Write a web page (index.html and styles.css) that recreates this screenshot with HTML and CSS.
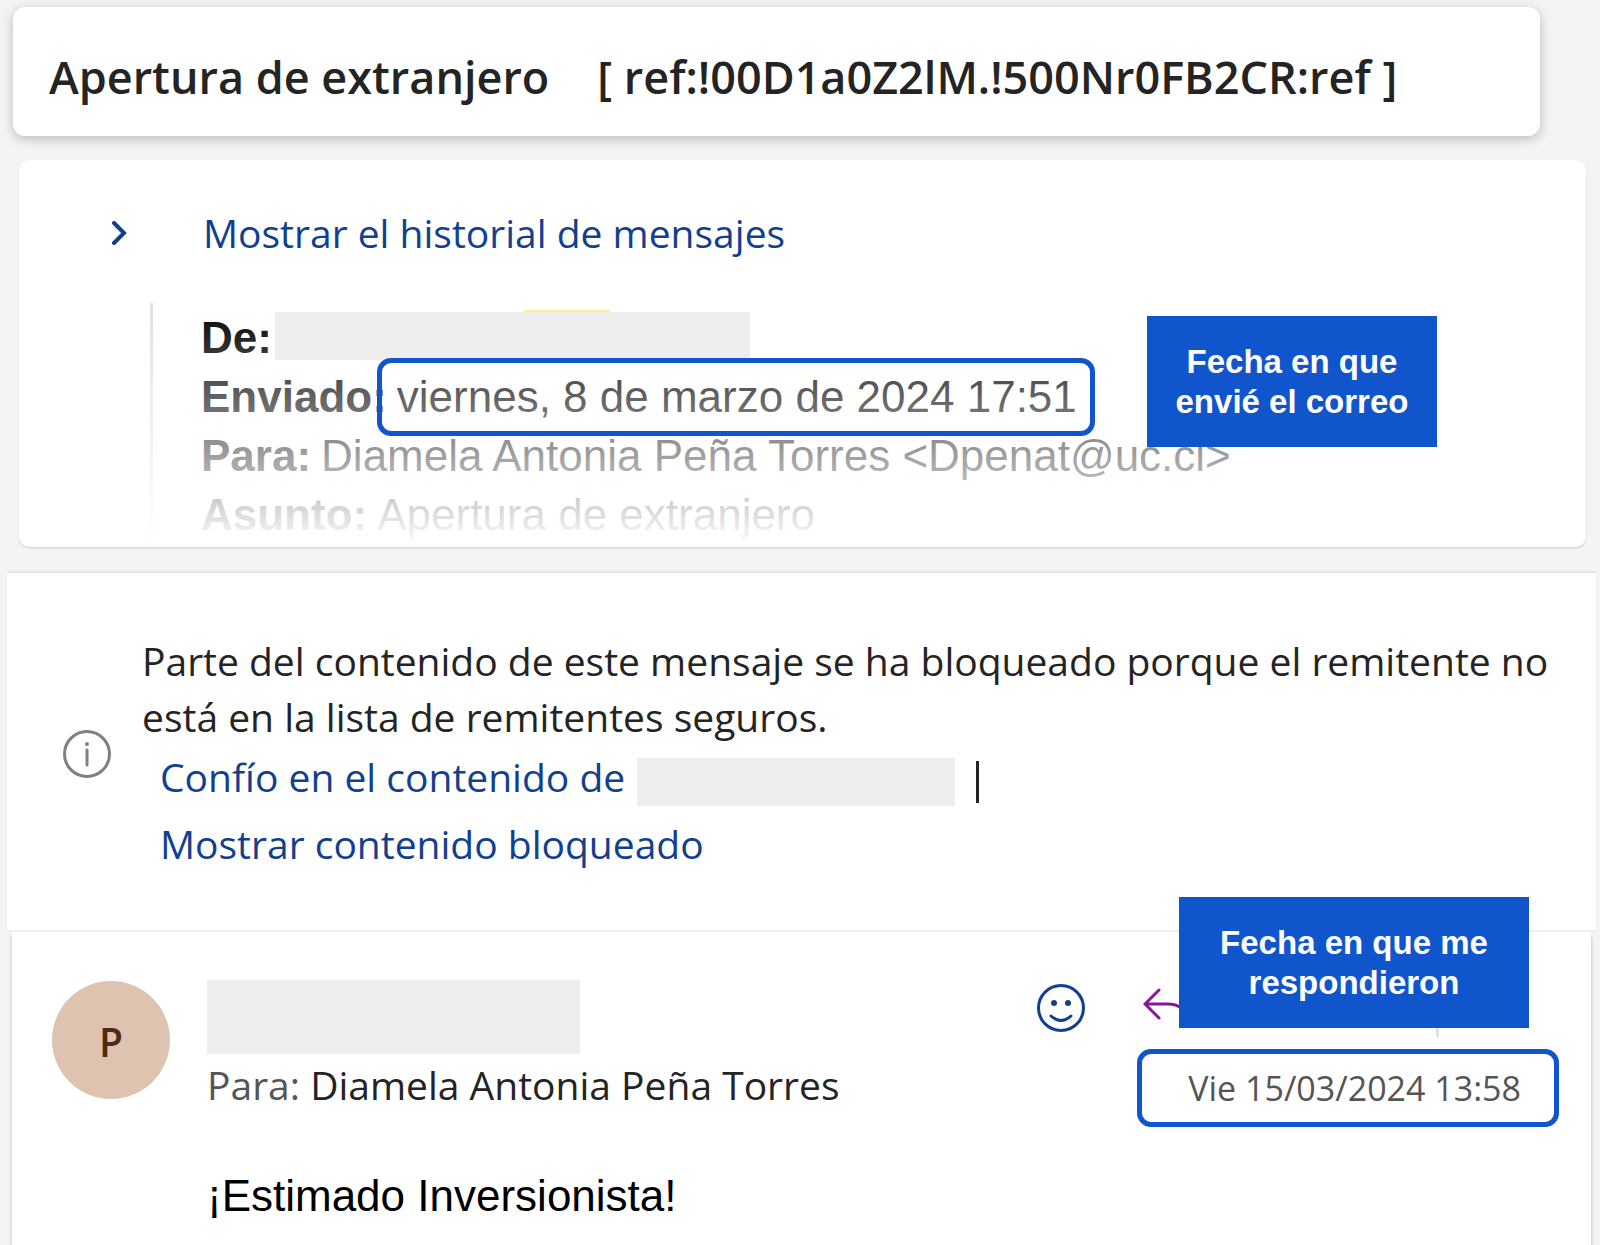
FILE: index.html
```
<!DOCTYPE html>
<html lang="es">
<head>
  <meta charset="UTF-8">
  <meta name="viewport" content="width=device-width, initial-scale=1.0">
  <title>Apertura de extranjero</title>
  <link rel="stylesheet" href="styles.css">
</head>
<body>
  <header class="subject">
    <h1>Apertura de extranjero</h1>
    <span class="ref">[ ref:!00D1a0Z2lM.!500Nr0FB2CR:ref ]</span>
  </header>

  <section class="history">
    <button class="history-toggle" type="button">
      <svg class="chevron" viewBox="0 0 16 24" width="16" height="24" aria-hidden="true">
        <path d="M3 2l10 10-10 10"/>
      </svg>
      <span>Mostrar el historial de mensajes</span>
    </button>
    <div class="quoted">
      <p><b>De:</b><span class="redacted redacted-from"></span></p>
      <p><b>Enviado:</b> <span class="sent">viernes, 8 de marzo de 2024 17:51</span></p>
      <p><b>Para:</b> Diamela Antonia Peña Torres &lt;Dpenat@uc.cl&gt;</p>
      <p><b>Asunto:</b> Apertura de extranjero</p>
    </div>
    <div class="ring ring-sent"></div>
    <div class="note note-sent">Fecha en que<br>envié el correo</div>
  </section>

  <section class="blocked">
    <svg class="info" viewBox="0 0 48 48" width="48" height="48" aria-hidden="true">
      <circle cx="24" cy="24" r="22.500"/>
      <path d="M24 20v15"/>
      <circle class="dot" cx="24" cy="14" r="2"/>
    </svg>
    <div class="blocked-text">
      <p>Parte del contenido de este mensaje se ha bloqueado porque el remitente no está en la lista de remitentes seguros.</p>
      <div class="trust">
        <a href="#">Confío en el contenido de</a>
        <span class="redacted redacted-trust"></span>
        <span class="divider"></span>
      </div>
      <a class="show-blocked" href="#">Mostrar contenido bloqueado</a>
    </div>
  </section>

  <article class="message">
    <div class="avatar">P</div>
    <div class="content">
      <div class="redacted redacted-sender"></div>
      <p class="to"><span>Para:</span> Diamela Antonia Peña Torres</p>
      <p class="greeting">¡Estimado Inversionista!</p>
    </div>
    <div class="side">
      <div class="actions">
        <button type="button" aria-label="Reaccionar">
          <svg class="smile" viewBox="0 0 48 48" width="48" height="48">
            <circle cx="24" cy="24" r="22.500"/>
            <circle class="dot" cx="17" cy="19" r="3"/>
            <circle class="dot" cx="31" cy="19" r="3"/>
            <path d="M14 32q10 9 20 0"/>
          </svg>
        </button>
        <button type="button" aria-label="Responder">
          <svg class="reply" viewBox="0 0 48 48" width="48" height="48">
            <path d="M16 6L2 20l14 14M2 20h23c10 0 17 5 19 15"/>
          </svg>
        </button>
        <span class="action-line"></span>
      </div>
      <time class="received" datetime="2024-03-15T13:58">Vie 15/03/2024 13:58</time>
    </div>
    <div class="note note-received">Fecha en que me<br>respondieron</div>
  </article>
</body>
</html>
```
FILE: styles.css
```
* {
  box-sizing: border-box;
}

body {
  margin: 0;
  padding: 7px 4px 0 7px;
  min-height: 100vh;
  display: flex;
  flex-direction: column;
  background-color: #f4f4f4;
  color: #242424;
  font-family: "Open Sans", "Noto Sans", sans-serif;
  font-size: 39px;
}

h1, p {
  margin: 0;
}

a {
  color: #123f8f;
  text-decoration: none;
}

button {
  padding: 0;
  border: 0;
  background: none;
  font: inherit;
  color: #123f8f;
  cursor: pointer;
}

svg {
  display: block;
  fill: none;
  stroke: currentColor;
  stroke-width: 3;
  stroke-linecap: round;
}

svg .dot {
  fill: currentColor;
  stroke: none;
}

.subject {
  display: flex;
  align-items: center;
  gap: 48px;
  margin: 0 56px 0 6px;
  padding: 14px 36px 4px;
  min-height: 129px;
  border-radius: 12px;
  background-color: #fff;
  box-shadow: 0 3px 12px rgba(0, 0, 0, 0.24);
  font-size: 45px;
  font-weight: 600;
  white-space: nowrap;
}

.subject h1 {
  font-size: inherit;
  font-weight: inherit;
}

.history {
  position: relative;
  margin: 24px 10px 0 12px;
  padding: 38px 40px 0 92px;
  border-radius: 10px;
  background-color: #fff;
  box-shadow: 0 1px 2px rgba(0, 0, 0, 0.16);
}

.history-toggle {
  display: flex;
  align-items: center;
  gap: 76px;
  line-height: 70px;
}

.chevron {
  stroke-width: 4;
}

/* quoted mail fades out towards the bottom of the card */
.quoted {
  position: relative;
  margin: 35px 0 0 39px;
  padding: 5px 0 3px 48px;
  border-left: 3px solid #e1e1e1;
  color: #000;
  font-family: "Liberation Sans", Arial, sans-serif;
  font-size: 44px;
  line-height: 59px;
  white-space: nowrap;
}

.quoted::after {
  content: "";
  position: absolute;
  top: 0;
  right: 0;
  bottom: 0;
  left: -3px;
  background: linear-gradient(rgba(255, 255, 255, 0), #fff);
}

.quoted p {
  display: flex;
  gap: 10px;
  height: 59px;
}

.redacted {
  background-color: #ededed;
}

.redacted-from {
  position: relative;
  z-index: 1;
  width: 475px;
  height: 48px;
  margin-top: 4px;
  margin-left: -7px;
}

.redacted-from::before {
  content: "";
  position: absolute;
  top: -2px;
  left: 249px;
  width: 86px;
  height: 2px;
  background-color: #fbf08c;
}

.ring,
.received {
  border: 5px solid #1155cc;
  border-radius: 14px;
}

.ring {
  position: absolute;
  z-index: 2;
}

.ring-sent {
  top: 198px;
  left: 358px;
  width: 718px;
  height: 78px;
}

.note {
  position: absolute;
  z-index: 3;
  padding: 26px 0 25px;
  background-color: #1155cc;
  color: #fff;
  font-family: "Liberation Sans", Arial, sans-serif;
  font-size: 33px;
  font-weight: bold;
  line-height: 40px;
  text-align: center;
}

.note-sent {
  top: 156px;
  right: 149px;
  width: 290px;
}

.blocked {
  display: flex;
  align-items: center;
  gap: 31px;
  margin-top: 26px;
  padding: 60px 24px 51px 56px;
  border-bottom: 2px solid #f0f0f0;
  background-color: #fff;
  box-shadow: 0 -2px 2px rgba(0, 0, 0, 0.08);
}

.info {
  flex: none;
  margin-bottom: 4px;
  color: #808080;
}

.blocked-text p {
  line-height: 56px;
}

.trust {
  display: flex;
  align-items: center;
  margin-left: 18px;
  line-height: 64px;
}

.redacted-trust,
.divider {
  margin-top: 10px;
}

.redacted-trust {
  width: 318px;
  height: 48px;
  margin-left: 12px;
  margin-right: 21px;
}

.divider {
  width: 3px;
  height: 42px;
  background-color: #242424;
}

.show-blocked {
  display: block;
  margin-left: 18px;
  line-height: 70px;
}

.message {
  position: relative;
  flex: 1;
  display: flex;
  align-items: flex-start;
  margin: 0 5px;
  padding: 48px 32px 0 40px;
  background-color: #fff;
  box-shadow: 0 4px 4px rgba(0, 0, 0, 0.24);
}

.avatar {
  flex: none;
  width: 118px;
  height: 118px;
  margin-top: 1px;
  margin-right: 37px;
  border-radius: 50%;
  background-color: #dec3b1;
  color: #4e2b17;
  font-weight: 600;
  line-height: 122px;
  text-align: center;
}

.content {
  flex: 1;
  white-space: nowrap;
}

.redacted-sender {
  width: 373px;
  height: 74px;
}

.to {
  line-height: 62px;
}

.to span {
  color: #555;
}

.greeting {
  margin-top: 52px;
  color: #000;
  font-family: "Liberation Sans", Arial, sans-serif;
  font-size: 44px;
  line-height: 56px;
}

.side {
  width: 422px;
}

.actions {
  display: flex;
  align-items: flex-start;
  gap: 58px;
  height: 69px;
  margin-left: -100px;
  padding-top: 4px;
}

.reply {
  color: #881798;
}

.action-line {
  width: 3px;
  height: 53px;
  margin-left: 187px;
  background-color: #e1e1e1;
}

.received {
  display: block;
  padding-right: 33px;
  color: #555;
  font-size: 34px;
  line-height: 68px;
  text-align: right;
}

.note-received {
  top: -35px;
  right: 62px;
  width: 350px;
}
```
